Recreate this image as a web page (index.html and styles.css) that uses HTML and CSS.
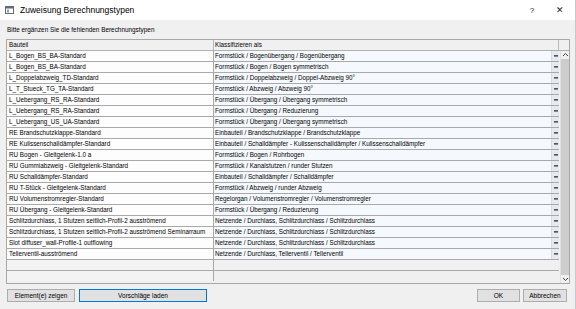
FILE: index.html
```html
<!DOCTYPE html>
<html>
<head>
<meta charset="utf-8">
<link rel="stylesheet" href="styles.css">
</head>
<body>
<div class="window">
  <div class="titlebar">
    <svg class="appicon" width="9" height="8" viewBox="0 0 9 8"><rect x="0.5" y="0.5" width="8" height="7" fill="#fff" stroke="#6a6a6a"/><rect x="1" y="1" width="7" height="1.5" fill="#5a6b80"/><rect x="2" y="3.5" width="2" height="3" fill="#8aa0b8"/></svg>
    <span class="title">Zuweisung Berechnungstypen</span>
    <span class="tb-btn help">?</span>
    <span class="tb-btn close">✕</span>
  </div>
  <div class="content">
    <div class="label">Bitte ergänzen Sie die fehlenden Berechnungstypen</div>
    <div class="grid">
      <div class="header">
        <div class="hc c1">Bauteil</div>
        <div class="hc c2">Klassifizieren als</div>
        <div class="hc c3"></div>
      </div>
      <div class="body">
        <div class="rows">
          <div class="row"><div class="c1">L_Bogen_BS_BA-Standard</div><div class="c2">Formstück / Bogenübergang / Bogenübergang</div><div class="dots"><i></i></div></div>
          <div class="row"><div class="c1">L_Bogen_BS_BA-Standard</div><div class="c2">Formstück / Bogen / Bogen symmetrisch</div><div class="dots"><i></i></div></div>
          <div class="row"><div class="c1">L_Doppelabzweig_TD-Standard</div><div class="c2">Formstück / Doppelabzweig / Doppel-Abzweig 90°</div><div class="dots"><i></i></div></div>
          <div class="row"><div class="c1">L_T_Stueck_TG_TA-Standard</div><div class="c2">Formstück / Abzweig / Abzweig 90°</div><div class="dots"><i></i></div></div>
          <div class="row"><div class="c1">L_Uebergang_RS_RA-Standard</div><div class="c2">Formstück / Übergang / Übergang symmetrisch</div><div class="dots"><i></i></div></div>
          <div class="row"><div class="c1">L_Uebergang_RS_RA-Standard</div><div class="c2">Formstück / Übergang / Reduzierung</div><div class="dots"><i></i></div></div>
          <div class="row"><div class="c1">L_Uebergang_US_UA-Standard</div><div class="c2">Formstück / Übergang / Übergang symmetrisch</div><div class="dots"><i></i></div></div>
          <div class="row"><div class="c1">RE Brandschutzklappe-Standard</div><div class="c2">Einbauteil / Brandschutzklappe / Brandschutzklappe</div><div class="dots"><i></i></div></div>
          <div class="row"><div class="c1">RE Kulissenschalldämpfer-Standard</div><div class="c2">Einbauteil / Schalldämpfer - Kulissenschalldämpfer / Kulissenschalldämpfer</div><div class="dots"><i></i></div></div>
          <div class="row"><div class="c1">RU Bogen - Gleitgelenk-1.0 a</div><div class="c2">Formstück / Bogen / Rohrbogen</div><div class="dots"><i></i></div></div>
          <div class="row"><div class="c1">RU Gummiabzweig - Gleitgelenk-Standard</div><div class="c2">Formstück / Kanalstutzen / runder Stutzen</div><div class="dots"><i></i></div></div>
          <div class="row"><div class="c1">RU Schalldämpfer-Standard</div><div class="c2">Einbauteil / Schalldämpfer / Schalldämpfer</div><div class="dots"><i></i></div></div>
          <div class="row"><div class="c1">RU T-Stück - Gleitgelenk-Standard</div><div class="c2">Formstück / Abzweig / runder Abzweig</div><div class="dots"><i></i></div></div>
          <div class="row"><div class="c1">RU Volumenstromregler-Standard</div><div class="c2">Regelorgan / Volumenstromregler / Volumenstromregler</div><div class="dots"><i></i></div></div>
          <div class="row"><div class="c1">RU Übergang - Gleitgelenk-Standard</div><div class="c2">Formstück / Übergang / Reduzierung</div><div class="dots"><i></i></div></div>
          <div class="row"><div class="c1">Schlitzdurchlass, 1 Stutzen seitlich-Profil-2 ausströmend</div><div class="c2">Netzende / Durchlass, Schlitzdurchlass / Schlitzdurchlass</div><div class="dots"><i></i></div></div>
          <div class="row"><div class="c1">Schlitzdurchlass, 1 Stutzen seitlich-Profil-2 ausströmend Seminarraum</div><div class="c2">Netzende / Durchlass, Schlitzdurchlass / Schlitzdurchlass</div><div class="dots"><i></i></div></div>
          <div class="row"><div class="c1">Slot diffuser_wall-Profile-1 outflowing</div><div class="c2">Netzende / Durchlass, Schlitzdurchlass / Schlitzdurchlass</div><div class="dots"><i></i></div></div>
          <div class="row"><div class="c1">Tellerventil-ausströmend</div><div class="c2">Netzende / Durchlass, Tellerventil / Tellerventil</div><div class="dots"><i></i></div></div>
          <div class="row empty"><div class="c1"></div><div class="c2"></div><div class="dots"></div></div>
          <div class="row empty last"><div class="c1"></div><div class="c2"></div><div class="dots"></div></div>
        </div>
        <div class="scrollbar">
          <svg class="arrow" width="7" height="6" viewBox="0 0 7 6"><path d="M1 4 L3.5 1.5 L6 4" fill="none" stroke="#444" stroke-width="1"/></svg>
          <div class="thumb"></div>
          <svg class="arrow" width="7" height="6" viewBox="0 0 7 6"><path d="M1 2 L3.5 4.5 L6 2" fill="none" stroke="#444" stroke-width="1"/></svg>
        </div>
      </div>
    </div>
    <div class="buttons">
      <button class="btn b-show">Element(e) zeigen</button>
      <button class="btn b-load">Vorschläge laden</button>
      <span class="spacer"></span>
      <button class="btn b-ok">OK</button>
      <button class="btn b-cancel">Abbrechen</button>
    </div>
  </div>
</div>
</body>
</html>
```

FILE: styles.css
```css
* { box-sizing: border-box; }
html, body { margin: 0; padding: 0; }
body {
  width: 576px; height: 309px; overflow: hidden;
  font-family: "Liberation Sans", Arial, sans-serif;
  color: #000;
  background: #f0f0f0;
}
.window {
  width: 576px; height: 309px;
  display: flex; flex-direction: column;
  border-right: 1px solid #c8c8c8;
  background: #f0f0f0;
}
.titlebar {
  height: 20px; flex: none;
  background: #fff;
  display: flex; align-items: center;
  padding-left: 5px;
  font-size: 8px;
}
.appicon { flex: none; }
.title { margin-left: 6px; font-size: 8.5px; color: #000; }
.tb-btn { font-size: 8px; color: #222; }
.help { margin-left: auto; width: 28px; text-align: center; }
.close { width: 28px; text-align: center; font-size: 9px; margin-right: 1px; }

.content {
  flex: 1;
  display: flex; flex-direction: column;
  padding: 0 5px 0 6px;
}
.label {
  font-size: 6.4px;
  height: 19px;
  line-height: 19px;
  padding-left: 1px;
}
.grid {
  height: 245px;
  border: 1px solid #a8a8a8;
  background: #f0f0f0;
  display: flex; flex-direction: column;
  font-size: 6.3px;
}
.header {
  display: flex; height: 11px; flex: none;
  border-bottom: 1px solid #b0b0b0;
  background: #f0f0f0;
}
.hc { line-height: 10px; padding-left: 2px; }
.header .c1 { width: 207px; border-right: 1px solid #b8b8b8; }
.header .c2 { width: 345px; border-right: 1px solid #b8b8b8; padding-left: 1px; }
.header .c3 { flex: 1; }

.body { flex: 1; display: flex; }
.rows { width: 552px; display: flex; flex-direction: column; }
.row {
  display: flex; height: 11px; flex: none;
  border-bottom: 1px solid #a9a9a9;
  line-height: 10px;
}
.row .c1 {
  width: 207px; flex: none;
  background: #fdfdfd;
  border-right: 1px solid #a9a9a9;
  padding-left: 2px;
  white-space: nowrap; overflow: hidden;
}
.row .c2 {
  flex: 1;
  background: #f5f9fd;
  padding-left: 1px;
  white-space: nowrap; overflow: hidden;
}
.row .dots {
  width: 8px; flex: none;
  background: #e6eaee;
  border-left: 1px solid #d8dde2;
  display: flex; align-items: center; justify-content: center;
}
.row .dots i {
  display: block; width: 4px; height: 2px;
  border-top: 1px solid #555; border-bottom: 1px solid #888;
}
.row.empty .c1 { background: #f3f3f3; }
.row.empty .c2, .row.empty .dots { background: #f0f0f0; border-left: none; }
.row.empty.last { border-bottom: none; height: 10px; }

.scrollbar {
  flex: 1;
  margin-left: 1px;
  display: flex; flex-direction: column; align-items: center;
  background: #f0f0f0;
  border-left: 1px solid #e0e0e0;
}
.arrow { flex: none; margin: 1px 0; }
.thumb { flex: 1; width: 8px; background: #cdcdcd; }

.buttons {
  display: flex; align-items: center;
  padding-top: 5px;
  padding-left: 1px;
}
.btn {
  font-family: inherit; font-size: 6.5px;
  height: 13px; padding: 0;
  background: #e1e1e1;
  border: 1px solid #adadad;
  color: #000;
  line-height: 11px;
}
.b-show { width: 68px; }
.b-load { width: 128px; margin-left: 4px; border-color: #0078d7; }
.spacer { flex: 1; }
.b-ok { width: 43px; }
.b-cancel { width: 44px; margin-left: 3px; margin-right: 3px; }
```
